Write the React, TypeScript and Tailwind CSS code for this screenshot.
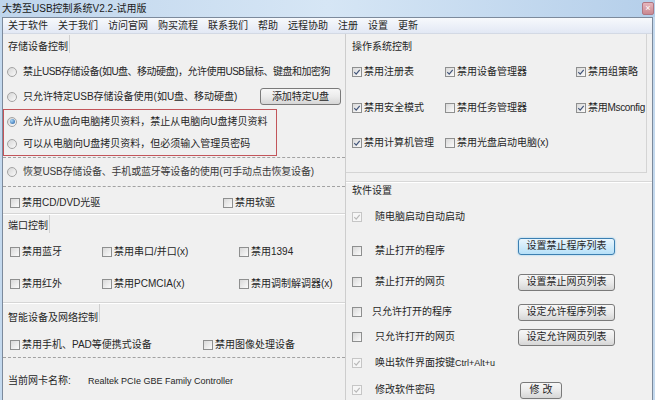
import React from 'react'

const font = "font-['Liberation_Sans','Noto_Sans_CJK_SC',sans-serif]"

function Check({ on = false, dim = false }: { on?: boolean; dim?: boolean }) {
    return (
        <span
            className={`inline-flex h-[10px] w-[10px] shrink-0 items-center justify-center border ${
                dim ? 'border-[#c6c6c6] bg-[#f6f6f6]' : 'border-[#8e8f8f] bg-gradient-to-br from-[#d9d9d9] to-[#fbfbfb]'
            }`}
        >
            {on && (
                <svg viewBox="0 0 10 10" className="h-[8px] w-[8px]">
                    <path d="M1.6 5.2 L4 7.6 L8.4 2.2" fill="none" stroke={dim ? '#b9b9b9' : '#42557a'} strokeWidth="1.5" />
                </svg>
            )}
        </span>
    )
}

function Radio({ on = false }: { on?: boolean }) {
    return (
        <span className="inline-flex h-[10px] w-[10px] shrink-0 items-center justify-center rounded-full border border-[#a3a3a3] bg-gradient-to-br from-[#d6d6d6] to-[#fafafa]">
            {on && <span className="h-[5px] w-[5px] rounded-full bg-[radial-gradient(circle_at_35%_35%,#a8d6f7,#1c5aa3)]" />}
        </span>
    )
}

function Btn({ children, focus = false, w }: { children: React.ReactNode; focus?: boolean; w: string }) {
    return (
        <button
            className={`${w} flex h-[17px] shrink-0 items-center justify-center rounded-[3px] border text-[10px] leading-none text-[#262626] ${
                focus
                    ? 'border-[#3c7fb1] bg-gradient-to-b from-[#eaf6fd] to-[#b6e0f8] shadow-[0_0_2px_#7ec4ef]'
                    : 'border-[#7a7a7a] bg-gradient-to-b from-[#f7f7f7] via-[#ebebeb] to-[#d6d6d6]'
            }`}
        >
            {children}
        </button>
    )
}

function Item({ on = false, dim = false, children, w = '' }: { on?: boolean; dim?: boolean; children: React.ReactNode; w?: string }) {
    return (
        <div className={`flex items-center gap-[2px] ${w}`}>
            <Check on={on} dim={dim} />
            <span className="whitespace-nowrap">{children}</span>
        </div>
    )
}

function GroupLabel({ children, h }: { children: React.ReactNode; h: string }) {
    return (
        <div className={`flex ${h} items-start pl-[5px]`}>
            <span className="flex h-full items-center whitespace-nowrap pr-[1px]">{children}</span>
            <span className="mt-[1px] h-[18px] w-px bg-[#cfcfcf]" />
        </div>
    )
}

const menus = ['关于软件', '关于我们', '访问官网', '购买流程', '联系我们', '帮助', '远程协助', '注册', '设置', '更新']

export default function App() {
    return (
        <div className={`flex h-[400px] w-[655px] flex-col overflow-hidden bg-[#c4d9ee] text-[10px] leading-[12px] text-[#262626] ${font}`}>
            {/* title bar */}
            <div className="flex h-[17px] shrink-0 items-center bg-gradient-to-r from-[#bfd5ec] via-[#d6e6f5] to-[#b5cfea] pl-[2px]">
                <span className="text-[10px] text-[#1a1a1a]">大势至USB控制系统V2.2-试用版</span>
                <span className="ml-auto mr-[1px] flex h-[13px] w-[12px] items-center justify-center rounded-[2px] border border-[#b07682] bg-gradient-to-b from-[#e6b6bd] to-[#c98891] text-[9px] leading-none text-white">
                    ×
                </span>
            </div>

            <div className="ml-[2px] flex w-[651px] flex-1 flex-col border-x border-t border-[#7c8a9c] bg-[#f0f0f0]">
                {/* menu */}
                <div className="flex h-[16px] shrink-0 items-center border-b border-[#d3d9e4] bg-gradient-to-b from-[#f7f9fc] to-[#e2e8f4]">
                    {menus.map((m) => (
                        <span key={m} className="px-[5px]">
                            {m}
                        </span>
                    ))}
                </div>

                <div className="flex flex-1">
                    {/* left column */}
                    <div className="flex w-[342px] shrink-0 flex-col">
                        <GroupLabel h="h-[26px]">存储设备控制</GroupLabel>
                        <div className="flex h-[24px] items-center gap-[6px] pl-[4px]">
                            <Radio />
                            <span className="whitespace-nowrap tracking-[-0.5px]">禁止USB存储设备(如U盘、移动硬盘)，允许使用USB鼠标、键盘和加密狗</span>
                        </div>
                        <div className="flex h-[25px] items-center pl-[4px]">
                            <Radio />
                            <span className="ml-[6px] whitespace-nowrap">只允许特定USB存储设备使用(如U盘、移动硬盘)</span>
                            <span className="ml-auto mr-[4px]">
                                <Btn w="w-[81px]">添加特定U盘</Btn>
                            </span>
                        </div>
                        <div className="flex w-[274px] flex-col border border-[#c2555a]">
                            <div className="flex h-[23px] items-center gap-[6px] pl-[3px]">
                                <Radio on />
                                <span className="whitespace-nowrap">允许从U盘向电脑拷贝资料，禁止从电脑向U盘拷贝资料</span>
                            </div>
                            <div className="flex h-[22px] items-center gap-[6px] pl-[3px]">
                                <Radio />
                                <span className="whitespace-nowrap">可以从电脑向U盘拷贝资料，但必须输入管理员密码</span>
                            </div>
                        </div>
                        <div className="mt-[1px] border-t border-dashed border-[#a2a2a2]" />
                        <div className="flex h-[28px] items-center gap-[6px] pl-[4px]">
                            <Radio />
                            <span className="whitespace-nowrap tracking-[-0.2px] text-[#3a3a3a]">恢复USB存储设备、手机或蓝牙等设备的使用(可手动点击恢复设备)</span>
                        </div>
                        <div className="border-t border-dashed border-[#a2a2a2]" />
                        <div className="flex h-[26px] items-center pl-[7px] pt-[5px]">
                            <Item w="w-[213px]">禁用CD/DVD光驱</Item>
                            <Item>禁用软驱</Item>
                        </div>

                        <div className="border-t border-[#d6d6d6] shadow-[inset_0_1px_0_#ffffff]">
                            <GroupLabel h="h-[24px]">端口控制</GroupLabel>
                            <div className="flex h-[28px] items-center pl-[7px]">
                                <Item w="w-[92px]">禁用蓝牙</Item>
                                <Item w="w-[137px]">禁用串口/并口(x)</Item>
                                <Item>禁用1394</Item>
                            </div>
                            <div className="flex h-[36px] items-center pl-[7px]">
                                <Item w="w-[92px]">禁用红外</Item>
                                <Item w="w-[137px]">禁用PCMCIA(x)</Item>
                                <Item>禁用调制解调器(x)</Item>
                            </div>
                        </div>

                        <div className="border-t border-[#d6d6d6] shadow-[inset_0_1px_0_#ffffff]">
                            <GroupLabel h="h-[29px]">智能设备及网络控制</GroupLabel>
                            <div className="flex h-[25px] items-center pl-[7px]">
                                <Item w="w-[193px]">禁用手机、PAD等便携式设备</Item>
                                <Item>禁用图像处理设备</Item>
                            </div>
                        </div>
                        <div className="border-t border-dashed border-[#a2a2a2]" />
                        <div className="flex h-[46px] items-center pl-[5px]">
                            <span className="w-[80px] whitespace-nowrap">当前网卡名称:</span>
                            <span className="whitespace-nowrap text-[9px]">Realtek PCIe GBE Family Controller</span>
                        </div>
                    </div>

                    {/* right column */}
                    <div className="flex flex-1 flex-col border-l border-[#cdcdcd]">
                        <div className="w-[301px] border-b border-r border-[#d4d4d4] pb-[18px]">
                            <div className="flex h-[26px] items-center pl-[6px]">操作系统控制</div>
                            <div className="flex h-[24px] items-center pl-[6px]">
                                <Item on w="w-[93px]">禁用注册表</Item>
                                <Item on w="w-[131px]">禁用设备管理器</Item>
                                <Item on>禁用组策略</Item>
                            </div>
                            <div className="flex h-[48px] items-center pl-[6px]">
                                <Item on w="w-[93px]">禁用安全模式</Item>
                                <Item w="w-[131px]">禁用任务管理器</Item>
                                <Item on>
                                    <span className="tracking-[-0.3px]">禁用Msconfig</span>
                                </Item>
                            </div>
                            <div className="flex h-[22px] items-center pl-[6px]">
                                <Item on w="w-[93px]">禁用计算机管理</Item>
                                <Item>禁用光盘启动电脑(x)</Item>
                            </div>
                        </div>

                        <div className="mt-[8px] flex flex-col border-t border-[#d8d8d8] shadow-[inset_0_1px_0_#ffffff]">
                            <div className="flex h-[18px] items-center pl-[6px]">软件设置</div>
                            <div className="grid h-[34px] grid-cols-[23px_143px_auto] items-center pl-[6px]">
                                <Check on dim />
                                <span>随电脑启动自动启动</span>
                            </div>
                            <div className="grid h-[34px] grid-cols-[23px_143px_auto] items-center pl-[6px]">
                                <Check />
                                <span>禁止打开的程序</span>
                                <span className="mb-[10px]">
                                    <Btn focus w="w-[97px]">设置禁止程序列表</Btn>
                                </span>
                            </div>
                            <div className="grid h-[28px] grid-cols-[23px_143px_auto] items-center pl-[6px]">
                                <Check />
                                <span>禁止打开的网页</span>
                                <Btn w="w-[97px]">设置禁止网页列表</Btn>
                            </div>
                            <div className="grid h-[32px] grid-cols-[23px_143px_auto] items-center pl-[6px]">
                                <Check />
                                <span className="-ml-[3px]">只允许打开的程序</span>
                                <Btn w="w-[97px]">设定允许程序列表</Btn>
                            </div>
                            <div className="grid h-[18px] grid-cols-[23px_143px_auto] items-center pl-[6px]">
                                <Check />
                                <span>只允许打开的网页</span>
                                <Btn w="w-[97px]">设定允许网页列表</Btn>
                            </div>
                            <div className="grid h-[34px] grid-cols-[23px_auto] items-center pl-[6px]">
                                <Check on dim />
                                <span className="whitespace-nowrap">
                                    唤出软件界面按键<span className="text-[9px]">Ctrl+Alt+u</span>
                                </span>
                            </div>
                            <div className="grid h-[20px] grid-cols-[23px_145px_auto] items-center pl-[6px]">
                                <Check on dim />
                                <span>修改软件密码</span>
                                <Btn w="w-[42px]">修 改</Btn>
                            </div>
                        </div>
                    </div>
                </div>
            </div>
        </div>
    )
}
